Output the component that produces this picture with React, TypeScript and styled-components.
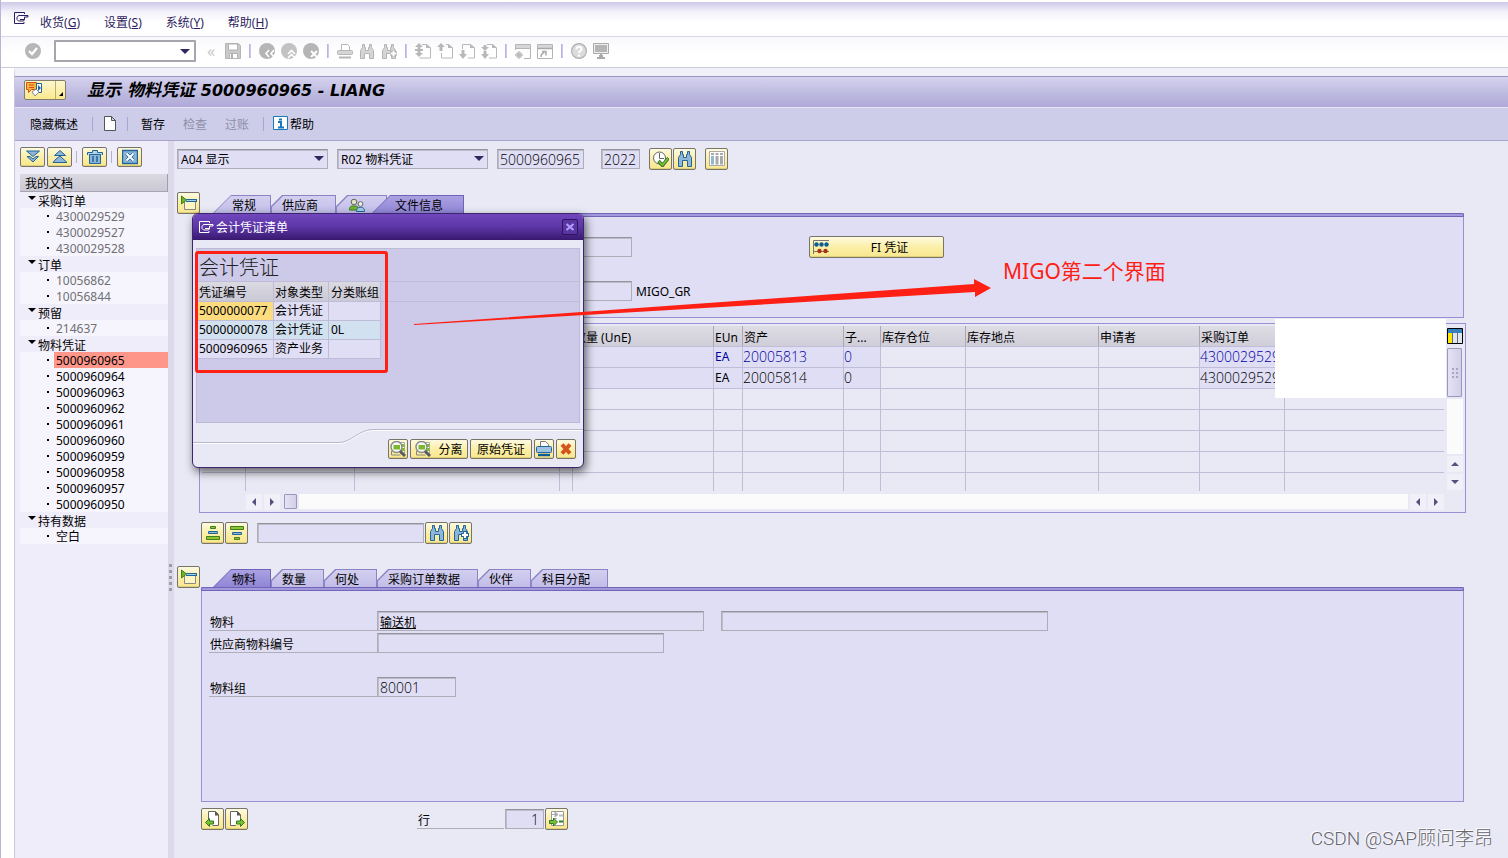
import React from 'react';
import styled, { createGlobalStyle, css } from 'styled-components';

const ui = `"Noto Sans", "Noto Sans CJK SC", sans-serif`;

const GlobalStyle = createGlobalStyle`
  *, *::before, *::after { box-sizing: border-box; }
  body { margin: 0; background: #fff; font: 12px/16px ${ui}; color: #000; }
  button, input, select { font: inherit; color: inherit; margin: 0; padding: 0; border-radius: 0; }
  button { background: none; border: 0; }
  ul { list-style: none; margin: 0; padding: 0; }
  h1, h2 { margin: 0; }
  svg { display: block; flex: none; }
`;

/* ---------- icons ---------- */

const icons: Record<string, React.ReactNode> = {
  exit: <path d="M11.500 4V2.500H1.500v11h9.500V12M15 5.500H5.500l-1.500 2v2l1.500 1.500h5l1-1.500M15 5.500v1.500h-3.500M7 9.500h4.500V7" fill="none" stroke="currentColor" />,
  check: <><circle cx="8" cy="8" r="8" fill="#b7b7b7" /><path d="M4 8l3 3 5-6" stroke="#fff" strokeWidth="2.200" fill="none" /></>,
  save: <><path d="M.5.5h13l2 2v13H.5z" fill="#c9c9c9" stroke="#b4b4b4" /><path d="M3.500 1h9v6h-9zM4.500 10.500h8v5h-8z" fill="#fff" stroke="#b4b4b4" /><path d="M7 11v4" stroke="#b0b0b0" strokeWidth="2" /></>,
  back: <><circle cx="8" cy="8" r="8" fill="#b5b5b5" /><path d="M10 7l-3 3.500 3 3.500M15 7l-3 3.500 3 3.500" stroke="#fff" strokeWidth="1.600" fill="none" /></>,
  up: <><circle cx="8" cy="8" r="8" fill="#c2c2c2" /><path d="M7 11l3.500-3.500L14 11M7 15l3.500-3.500L14 15" stroke="#fff" strokeWidth="1.600" fill="none" /></>,
  cancel: <><circle cx="8" cy="8" r="8" fill="#b5b5b5" /><path d="M8 8l6 6M14 8l-6 6" stroke="#fff" strokeWidth="2" /></>,
  printGray: <><path d="M4.500 8V1.500h6l2 2V8" fill="#fff" stroke="#b5b5b5" /><rect x=".5" y="7.500" width="15" height="4" rx="1" fill="#d5d5d5" stroke="#b5b5b5" /><path d="M2 14.500h12" stroke="#b5b5b5" strokeWidth="2" /></>,
  findGray: <path d="M3.500 1.500h2v3h1v3h3v-3h1v-3h2v3l2 3v8h-4v-5h-5v5h-4v-8l2-3z" fill="#d5d5d5" stroke="#b4b4b4" />,
  nextGray: <><path d="M3.500 1.500h2v3h1v3h3v-3h1v-3h2v3l2 3v8h-4v-5h-5v5h-4v-8l2-3z" fill="#d5d5d5" stroke="#b4b4b4" /><path d="M9 10.500h7M12.500 7v7" stroke="#aaa" strokeWidth="4" /><path d="M9.500 10.500h6M12.500 7.500v6" stroke="#fff" strokeWidth="2" /></>,
  pageFirst: <><path d="M7 1.500h5l3.500 3.500v10H4.500" fill="none" stroke="#b8b8b8" /><path d="M4 0l4 4H5.500v2H8v2H5.500v2H8l-4 4-4-4h2.500V8H0V6h2.500V4H0z" fill="#b8b8b8" /><path d="M11 1v4h5z" fill="#b8b8b8" /></>,
  pageUp: <><path d="M9 1.500h3l3.500 3.500v10h-11v-5" fill="none" stroke="#b8b8b8" /><path d="M4 0l4 4H5.500v4h-3V4H0zM11 1v4h5z" fill="#b8b8b8" /></>,
  pageDown: <><path d="M3.500 6V1.500h8.500l3.500 3.500v10H9" fill="none" stroke="#b8b8b8" /><path d="M4 16l4-5H5.500V7h-3v4H0zM11 1v4h5z" fill="#b8b8b8" /></>,
  pageLast: <><path d="M6 1.500h6l3.500 3.500v10H8" fill="none" stroke="#b8b8b8" /><path d="M4 8l4-4H5.500V2h-3v2H0zM4 16l4-5H5.500V8h-3v3H0zM11 1v4h5z" fill="#b8b8b8" /></>,
  session: <><path d="M.5 7V1.500h15v14H9" fill="none" stroke="#b5b5b5" /><path d="M1 2h14v3H1z" fill="#d6d6d6" /><path d="M0 5.500h16" stroke="#b5b5b5" /><path d="M4 8v8M0 12h8M1.500 9.500l5 5M6.500 9.500l-5 5" stroke="#bbb" strokeWidth="1.400" /></>,
  shortcut: <><path d="M.5 1.500h15v14H.5z" fill="none" stroke="#b5b5b5" /><path d="M1 2h14v3H1z" fill="#d6d6d6" /><path d="M0 5.500h16M4 14c0-3 1-4 3.500-4.500M5 8.500h4v4" stroke="#aaa" strokeWidth="1.500" fill="none" /></>,
  help: <><circle cx="8" cy="8" r="7.400" fill="#dcdcdc" stroke="#b0b0b0" strokeWidth="1.200" /><path d="M5.500 6.200C5.500 3 10.500 3 10.500 6 10.500 8 8 8 8 10M8 11.500v2" stroke="#fff" strokeWidth="2" fill="none" /></>,
  monitor: <><path d="M.5.500h15v10H.5z" fill="#eee" stroke="#aaa" /><path d="M2 2h12v7H2z" fill="#b5b5b5" /><path d="M8 11v3M4 15h8M6 13h4" stroke="#aaa" strokeWidth="2" /></>,
  page: <path d="M2.500.500h7l4 4v10h-11zM9.500.500v4h4z" fill="#fff" stroke="#555" />,
  info: <><path d="M.5.500h14v13H.5z" fill="#fff" stroke="#1878b8" /><path d="M5 6h3v5M5 11.500h6M6 3.500h3" stroke="#1878b8" strokeWidth="2" fill="none" /></>,
  expand: <path d="M1.500 2h13L8 7.500zM4 7.500h1L8 10l3-2.500h2.500L8 13 2 7.500z" fill="#8fb6d8" stroke="#20659a" />,
  collapse: <path d="M8 1.500l5.500 5H2.500zM8 7l7 6.500H1L4 10z" fill="#8fb6d8" stroke="#20659a" />,
  trash: <><path d="M.5 6V3.500h5V1.500h5v2h5V6" fill="#b8d4ea" stroke="#20659a" /><path d="M2.500 5.500h11v9h-11z" fill="#8fb6d8" stroke="#20659a" /><path d="M6 7v6M10 7v6" stroke="#20659a" strokeWidth="1.500" /></>,
  close: <><path d="M.5 1.500h15v13H.5z" fill="#8fb6d8" stroke="#20659a" strokeWidth="1.500" /><path d="M4.500 4.500l7 7M11.500 4.500l-7 7" stroke="#20659a" strokeWidth="3.500" /><path d="M4.500 4.500l7 7M11.500 4.500l-7 7" stroke="#fff" strokeWidth="2" /></>,
  clock: <><circle cx="6.500" cy="7" r="6" fill="#fff" stroke="#666" /><path d="M6.500 2v5.500H11" stroke="#666" fill="none" /><path d="M5.500 10l4 4.500L15.500 7" stroke="#2f7a2b" strokeWidth="3.400" fill="none" /><path d="M6 10.500l3.500 3.500L15 7.500" stroke="#84c136" strokeWidth="1.600" fill="none" /></>,
  find: <path d="M3.500.500h2v3h1v3h3v-3h1v-3h2v3l2 3v9h-4v-6h-5v6h-4v-9l2-3z" fill="#8fb6d8" stroke="#20659a" />,
  findNext: <><path d="M3.500.500h2v3h1v3h3v-3h1v-3h2v3l2 3v9h-4v-6h-5v6h-4v-9l2-3z" fill="#8fb6d8" stroke="#20659a" /><path d="M8 10h8M12 6v8" stroke="#20659a" strokeWidth="4" /><path d="M9 10h6M12 7v6" stroke="#fff" strokeWidth="2.200" /></>,
  columns: <><path d="M.5.500h15v14H.5z" fill="#fff" stroke="#aaa" /><path d="M2 2h3v2H2zM6.500 2h3v2h-3zM11 2h3v2h-3zM6.500 5h3v8.500h-3zM11 5h3v8.500h-3z" fill="#a9a9a9" /><path d="M2 5h3v8.500H2z" fill="#8fb9cf" /></>,
  panel: <><path d="M3.500 6v8.500h11V6" fill="#fdf5c4" stroke="#888" /><path d="M5 5.500h11" stroke="#20659a" strokeWidth="3" /><path d="M5 5.500h10" stroke="#9fd0e8" /><path d="M.5 1v8l5-4z" fill="#6db52c" stroke="#3f7f1c" /></>,
  partners: <><circle cx="5" cy="4" r="2.800" fill="#e6e2c8" stroke="#5d6a5a" /><path d="M.5 12c0-4 2-4 4.500-4s4.500 0 4.500 4z" fill="#71b530" stroke="#3f7a20" /><circle cx="11.500" cy="6" r="2.400" fill="#eee" stroke="#666" /><path d="M7.500 13.500c0-4 2-4 4-4s4 0 4 4z" fill="#a6cdea" stroke="#20659a" /></>,
  fi: <><path d="M.5 15V1.500H16M.5 12.500H16" stroke="#777" fill="none" /><g fill="#0b5c93"><circle cx="3.500" cy="5.500" r="2.200" /><circle cx="8.500" cy="5.500" r="2.200" /><circle cx="13.500" cy="5.500" r="2.200" /></g><g fill="#a83216"><circle cx="6.500" cy="12" r="2.200" /><circle cx="12.500" cy="12" r="2.200" /></g></>,
  asc: <><path d="M5.500 1.500h5v2h-5zM1.500 11.500h13v3h-13z" fill="#8fc32f" stroke="#3f7f1c" /><path d="M3.500 6.500h9v2h-9z" fill="#8fb6d8" stroke="#20659a" /></>,
  desc: <><path d="M1.500 1.500h13v3h-13zM5.500 12.500h5v2h-5z" fill="#8fc32f" stroke="#3f7f1c" /><path d="M3.500 7.500h9v2h-9z" fill="#8fb6d8" stroke="#20659a" /></>,
  prev: <><path d="M3.500 8V.5h7l3 3v11h-6" fill="#fff" stroke="#666" /><path d="M10 0v4.500h4z" fill="#555" /><path d="M.5 11.500l4-4v2.500h4v3h-4v2.500z" fill="#7cc030" stroke="#2f7a2b" /></>,
  next: <><path d="M7 14.500H1.500V.5h7l3 3V8" fill="#fff" stroke="#666" /><path d="M8 0v4.500h4z" fill="#555" /><path d="M15.500 11.500l-4-4v2.500h-4v3h4v2.500z" fill="#7cc030" stroke="#2f7a2b" /></>,
  goto: <><path d="M2.500.500h12v14h-12z" fill="#fff" stroke="#999" /><path d="M3 3.500h5M6 1v5l3-2.500zM5 7.500h3" stroke="#aaa" fill="#aaa" /><path d="M10 10.500h4" stroke="#2f7a2b" strokeWidth="2" /><path d="M10 4.500h4" stroke="#bbb" strokeWidth="2" /><path d="M8.500 11l-4-4v2.500h-4v3h4V15z" fill="#7cc030" stroke="#2f7a2b" /></>,
  detail: <><path d="M9 1.500h5.500v11H10" fill="#fff" stroke="#aaa" /><path d="M13 3v3M13 7v3" stroke="#7cc030" strokeWidth="3" /><path d="M1.500 10v4h9" fill="none" stroke="#888" /><circle cx="6.500" cy="6" r="5.500" fill="#f5f7f4" stroke="#888" strokeWidth="1.400" /><path d="M3.500 4h6.500v4.500H3.500z" fill="#7cb82c" /><path d="M10 10l5 5" stroke="#5c5c5c" strokeWidth="3" /></>,
  print: <><path d="M4.500 6V.5h5l3 3V6" fill="#fff" stroke="#777" /><rect x=".5" y="5.500" width="15" height="6" rx="1" fill="#9cc3e2" stroke="#20659a" /><path d="M2 14h12" stroke="#0b5c93" strokeWidth="2.500" /></>,
  cross: <path d="M4 3.500l8 9M12 3.500l-8 9" stroke="#d4551b" strokeWidth="4" />,
  x: <path d="M4 4.500l8 7M12 4.500l-8 7" stroke="#b49cff" strokeWidth="2.400" />,
  config: <><path d="M.5.500h15v15H.5z" fill="#fff" stroke="#000" /><path d="M1 1h14v4H1z" fill="#2a86c8" /><path d="M1 5h5v10H1z" fill="#ffe800" /><path d="M6 5h4v10H6zM11 5h4v10h-4z" fill="#dfe6ec" /><path d="M5.500 1v14M10.500 1v14" stroke="#668" /></>,
  left: <path d="M10 4v8L6 8z" fill="#55517d" />,
  right: <path d="M6 4v8l4-4z" fill="#55517d" />,
  upArrow: <path d="M4 10h8L8 6z" fill="#55517d" />,
  downArrow: <path d="M4 6h8l-4 4z" fill="#55517d" />,
};

const Icon = ({ name, size = 16 }: { name: string; size?: number }) => (
  <svg width={size} height={size} viewBox="0 0 16 16" aria-hidden="true">{icons[name]}</svg>
);

/* ---------- window chrome ---------- */

const Page = styled.div`
  position: relative;
  min-height: 100vh;
  display: flex;
  flex-direction: column;
  border-left: 1px solid #bab4d6;
  overflow: hidden;
`;
const MenuBar = styled.nav`
  height: 37px;
  display: flex;
  align-items: center;
  gap: 24px;
  padding: 8px 0 0 12px;
  color: #2d1d60;
  border-bottom: 1px solid #d9d7ea;
  background: linear-gradient(#fff 2px, #cdc9e8 2px, #f3f2fa 12px, #fff 22px);
`;
const MenuIcon = styled.span`
  width: 3px;
  padding-bottom: 8px;
`;
const MenuItem = styled.button`
  padding-top: 2px;
`;
const Toolbar = styled.div`
  height: 31px;
  display: flex;
  align-items: center;
  gap: 6px;
  padding: 0 0 2px 24px;
  background: linear-gradient(#f8f8fc, #fff 16px);
  border-bottom: 1px solid #cccbd6;
`;
const FlatIcon = styled.button`
  width: 16px;
  height: 16px;
`;
const BarRule = styled.span`
  width: 2px;
  height: 14px;
  margin: 0 2px;
  background: linear-gradient(90deg, #b1a9de, #d7d3ee);
`;
const dropArrow = css`
  &::after {
    content: '';
    position: absolute;
    right: 4px;
    top: 7px;
    border: 5px solid transparent;
    border-top-color: #33255f;
    border-bottom: 0;
    pointer-events: none;
  }
`;
const CommandField = styled.label`
  position: relative;
  width: 142px;
  margin: 0 1px 0 7px;
  ${dropArrow}
  &::after { right: 6px; top: 9px; }
  input {
    display: block;
    width: 100%;
    height: 22px;
    border: 2px solid #a5a5ad;
    background: #fff;
    border-radius: 1px;
  }
`;
const Chevrons = styled.span`
  width: 16px;
  color: #c8c8c8;
  font-size: 16px;
  text-align: center;
`;
const Frame = styled.div`
  flex: 1;
  display: flex;
  flex-direction: column;
  margin-left: 13px;
  border-left: 1px solid #c9c6e0;
  border-top: 8px solid #f0f0f8;
`;
const TitleBar = styled.header`
  height: 32px;
  display: flex;
  align-items: center;
  gap: 21px;
  padding: 0 0 4px 9px;
  border-top: 1px solid #9a94bf;
  border-bottom: 1px solid #e6e3f5;
  background: linear-gradient(#d6d2ef, #bbb8de 18px, #b0a9d9);
`;
const Title = styled.h1`
  font: italic bold 16px/20px "DejaVu Sans", "Noto Sans CJK SC", sans-serif;
  span { font-size: 17px; }
`;
const ServiceButton = styled.button`
  display: flex;
  align-items: center;
  width: 42px;
  height: 20px;
  border: 1px solid #807d6c;
  border-radius: 2px;
  background: linear-gradient(#fdf7d0, #fae88d);
`;
const ActionBar = styled.div`
  height: 33px;
  display: flex;
  align-items: center;
  padding-left: 15px;
  background: #cdcde9;
  border-bottom: 1px solid #a9a4cc;
`;
const Action = styled.button<{ $tight?: boolean }>`
  display: flex;
  align-items: center;
  gap: 1px;
  margin-right: ${p => (p.$tight ? 13 : 18)}px;
  &:disabled { color: #8f8da8; }
  span { padding-top: 2px; }
`;
const ActionRule = styled.span<{ $wide?: boolean }>`
  width: 1px;
  height: 14px;
  margin: 0 ${p => (p.$wide ? 13 : 9)}px 0 -4px;
  background: #a9a3d2;
`;

/* ---------- controls ---------- */

const GoldButton = styled.button<{ $w?: number; $h?: number }>`
  flex: none;
  display: flex;
  align-items: center;
  justify-content: center;
  gap: 7px;
  width: ${p => p.$w ?? 23}px;
  height: ${p => p.$h ?? 22}px;
  border: 1px solid #77756a;
  border-radius: 2px;
  background: linear-gradient(#fefae0, #fbefa8 50%, #f9e78e);
  box-shadow: inset 0 -1px 0 #e0ce78;
  span { padding-top: 2px; }
`;
const fieldLook = css`
  border: 1px solid #adadb5;
  border-top-color: #94949e;
  background: #e0def5;
  box-shadow: inset 1px 1px 0 #bebcca;
  height: 20px;
`;
const Field = styled.input<{ $w: number }>`
  ${fieldLook}
  width: ${p => p.$w}px;
  padding: 0 2px;
  font-family: "Open Sans", ${ui};
  font-weight: 300;
  font-size: 14px;
`;
const NumberField = styled(Field)`
  text-align: right;
  padding-right: 4px;
`;
const LinkField = styled(Field)`
  padding-top: 2px;
  font-weight: 400;
  font-size: 12px;
  text-decoration: underline;
`;
const SelectBox = styled.span`
  position: relative;
  ${dropArrow}
  select {
    ${fieldLook}
    display: block;
    appearance: none;
    width: 151px;
    padding: 2px 0 0 3px;
  }
`;

/* ---------- layout ---------- */

const Workspace = styled.div`
  flex: 1;
  display: flex;
`;
const Sidebar = styled.aside`
  width: 153px;
  flex: none;
  padding: 6px 0 0 5px;
  background: #efedfa;
`;
const SideTools = styled.div`
  display: flex;
  align-items: center;
  gap: 2px;
  height: 20px;
  margin-bottom: 7px;
`;
const SideRule = styled.span`
  width: 1px;
  height: 12px;
  margin: 0 3px 0 2px;
  background: #b5b3c4;
`;
const SideHeader = styled.h2`
  height: 18px;
  padding-left: 5px;
  font: 12px/19px ${ui};
  background: linear-gradient(#dbdae2, #c9c8d3);
  border-right: 1px solid #9f9dae;
  border-bottom: 1px solid #a5a3b4;
`;
const Group = styled.li`
  background: #efedf9;
`;
const GroupName = styled.div`
  height: 16px;
  padding: 3px 0 0 18px;
  display: flex;
  align-items: center;
  &::before {
    content: '';
    margin: -8px 2px 0 -10px;
    border: 4px solid transparent;
    border-top-color: #000;
    border-bottom: 0;
  }
`;
const Leaf = styled.li<{ $dim?: boolean; $selected?: boolean }>`
  height: 16px;
  display: flex;
  align-items: center;
  padding-left: 27px;
  background: #f6f5fe;
  color: ${p => (p.$dim ? '#707070' : '#000')};
  &::before {
    content: '';
    width: 2px;
    height: 2px;
    margin: 0 5px 1px 0;
    background: #000;
  }
  span {
    flex: 1;
    height: 16px;
    padding: 1px 0 0 2px;
    background: ${p => (p.$selected ? '#ff968a' : 'none')};
  }
`;
const Splitter = styled.div`
  width: 6px;
  flex: none;
  background: #dbd9ea;
  padding: 423px 0 0 1px;
  span {
    display: block;
    width: 3px;
    height: 3px;
    margin-bottom: 3px;
    background: #9d9ba8;
  }
`;
const Main = styled.main`
  flex: 1;
  min-width: 0;
  padding: 7px 42px 28px 0;
  background: #e9e9f5;
`;
const FieldRow = styled.div`
  display: flex;
  align-items: center;
  gap: 9px;
  height: 22px;
  padding-left: 3px;
`;
const Spacer = styled.span<{ $w: number }>`
  width: ${p => p.$w}px;
  flex: none;
`;
const Cluster = styled.div<{ $gap?: number }>`
  display: flex;
  align-items: center;
  gap: ${p => p.$gap ?? 1}px;
`;
const Section = styled.section`
  display: flex;
  align-items: flex-start;
  gap: 1px;
  margin-top: 22px;
  padding: 0 2px 0 3px;
`;
const SectionBody = styled.div`
  flex: 1;
  min-width: 0;
  padding-top: 3px;
`;
const Tabs = styled.div`
  display: flex;
  height: 18px;
  padding-left: 12px;
`;
const Tab = styled.button<{ $active?: boolean; $slope?: boolean; $overlap?: boolean }>`
  position: relative;
  display: flex;
  align-items: center;
  height: 18px;
  padding: 4px 18px 0 11px;
  background: ${p => (p.$active ? '#6f63b8' : '#8b84c4')};
  clip-path: polygon(11px 0, 100% 0, 100% 100%, 0 100%, 0 11px);
  ${p => p.$slope && css`
    padding: 4px 15px 0 19px;
    clip-path: polygon(18px 0, 100% 0, 100% 100%, 0 100%);
  `}
  ${p => p.$overlap && css`
    padding: 4px 21px 0 23px;
    margin-left: -15px;
  `}
  &::before {
    content: '';
    position: absolute;
    inset: 1px 1px 0 1px;
    background: ${p => (p.$active ? 'linear-gradient(#aaa1e2, #9086d6)' : 'linear-gradient(#d3cff0, #c2bde8)')};
    clip-path: ${p => (p.$slope ? 'polygon(17px 0, 100% 0, 100% 100%, 0 100%)' : 'polygon(11px 0, 100% 0, 100% 100%, 0 100%, 0 11px)')};
  }
  > * { position: relative; }
`;
const Panel = styled.div<{ $h: number }>`
  min-height: ${p => p.$h}px;
  background: #e0def4;
  border: 1px solid #9990d4;
  border-top: 0;
  &::before {
    content: '';
    display: block;
    height: 4px;
    margin: 0 -1px;
    background: #a198dd;
    border: 1px solid #7166b6;
    border-radius: 2px 2px 0 0;
  }
`;
const FormRow = styled.div<{ $top?: number }>`
  display: flex;
  align-items: center;
  height: 20px;
  margin-top: ${p => p.$top ?? 2}px;
  padding-left: 7px;
`;
const FormLabel = styled.label<{ $w: number }>`
  width: ${p => p.$w}px;
  height: 20px;
  padding: 4px 0 0 1px;
  border-bottom: 1px solid #b0afb8;
`;
const Note = styled.span`
  padding: 2px 0 0 4px;
`;
const FiLabel = styled.span`
  flex: 1;
  text-align: center;
`;

/* ---------- item grid ---------- */

const GridPanel = styled.div`
  position: relative;
  margin: 5px 0 9px 25px;
  padding: 2px;
  border: 1px solid #9990d4;
  display: flex;
  gap: 3px;
`;
const GridMain = styled.div`
  flex: 1;
  min-width: 0;
`;
const ItemTable = styled.table`
  width: 100%;
  table-layout: fixed;
  border-collapse: separate;
  border-spacing: 0;
  th, td {
    height: 21px;
    padding: 0 1px;
    text-align: left;
    font-weight: normal;
    white-space: nowrap;
    overflow: hidden;
    border-right: 1px solid #bfbdd8;
    border-bottom: 1px solid #bfbdd8;
  }
  th {
    padding-top: 3px;
    background: linear-gradient(#dedde4, #cfced9);
    border-right-color: #a9a7b8;
  }
  th:last-child, td:last-child { border-right: 0; }
  tbody tr:last-child td { height: 18px; border-bottom: 0; }
`;
const Cell = styled.td<{ $filled?: boolean; $blue?: boolean; $big?: boolean }>`
  background: ${p => (p.$filled ? '#e0def5' : 'transparent')};
  color: ${p => (p.$blue ? '#0000a0' : '#000')};
  ${p => p.$big && css`
    && { padding-left: 0; }
    font-family: "Open Sans", ${ui};
    font-weight: 300 !important;
    font-size: 14px;
  `}
`;
const HScroll = styled.div`
  display: flex;
  align-items: center;
  gap: 2px;
  height: 15px;
  margin: 3px 0 1px 44px;
`;
const ScrollButton = styled.button`
  width: 16px;
  height: 16px;
  background: #f1f0f9;
`;
const Track = styled.div`
  flex: 1;
  height: 15px;
  background: #fbfbfc;
`;
const Thumb = styled.div<{ $w: number; $h: number }>`
  width: ${p => p.$w}px;
  height: ${p => p.$h}px;
  border: 1px solid #9c98bb;
  border-radius: 1px;
  background: linear-gradient(90deg, #e4e2f3, #d2cfe8);
  display: grid;
  place-content: center;
  grid-template-columns: 2px 2px;
  gap: 2px;
  span { width: 2px; height: 2px; background: #a9a5c8; }
`;
const VScroll = styled.div`
  width: 16px;
  display: flex;
  flex-direction: column;
  gap: 2px;
  padding-bottom: 20px;
`;
const VTrack = styled(Track)`
  width: 16px;
`;
const ConfigButton = styled.button`
  width: 16px;
  height: 20px;
`;
const Blank = styled.div`
  position: absolute;
  right: 19px;
  top: -5px;
  width: 171px;
  height: 79px;
  background: #fff;
`;

/* ---------- dialog ---------- */

const Dialog = styled.div`
  position: absolute;
  left: 191px;
  top: 213px;
  width: 392px;
  height: 255px;
  display: flex;
  flex-direction: column;
  border: 1px solid #3c2670;
  border-radius: 6px;
  overflow: hidden;
  background: #e9e9f5;
  box-shadow: 2px 4px 10px rgba(0, 0, 0, 0.6);
`;
const DialogTitle = styled.div`
  height: 26px;
  display: flex;
  align-items: center;
  gap: 2px;
  padding: 0 5px 0 5px;
  color: #fff;
  background: linear-gradient(#7146bd, #5c36a6 50%, #38196f);
  h2 { flex: 1; padding-top: 2px; font: 12px/16px ${ui}; }
`;
const CloseButton = styled.button`
  width: 16px;
  height: 16px;
  display: grid;
  place-items: center;
  border: 1px solid #2c145f;
  border-radius: 2px;
  background: #5a36a2;
`;
const DialogBody = styled.div`
  height: 175px;
  margin: 8px 3px 0;
  border: 1px solid #bdbad6;
  background: #cdcae9;
`;
const ListHeading = styled.h2`
  height: 33px;
  padding: 0 2px;
  border-bottom: 1px solid #bfbcd9;
  font: 300 20px/35px "Noto Sans CJK SC", sans-serif;
  color: #222;
`;
const ListBand = styled.div`
  border-bottom: 1px solid #bfbcd9;
  height: 20px;
`;
const DocTable = styled.table`
  border-collapse: separate;
  border-spacing: 0;
  table-layout: fixed;
  width: 184px;
  th, td {
    height: 19px;
    padding: 0 2px;
    font-weight: normal;
    text-align: left;
    white-space: nowrap;
    border-right: 1px solid #bfbcd9;
    border-bottom: 1px solid #bfbcd9;
    background: #e0def4;
  }
  th { height: 20px; padding-top: 3px; background: linear-gradient(#dbdae2, #cac9d6); }
  th:nth-child(2), td:nth-child(2) { padding-left: 1px; }
  tbody tr:nth-child(2) td { background: #d1e1ef; }
  tbody tr:first-child td:first-child { background: #fddc80; }
`;
const DialogFooter = styled.div`
  position: relative;
  flex: 1;
  display: flex;
  gap: 2px;
  justify-content: flex-end;
  padding: 16px 7px 0;
`;
const FooterCurve = styled.svg`
  position: absolute;
  left: 0;
  top: 6px;
`;
const DialogButtons = styled.div`
  position: relative;
  display: flex;
  align-items: flex-start;
  gap: 2px;
`;
const BottomRow = styled.div`
  display: flex;
  gap: 169px;
  margin-top: 6px;
  padding-left: 27px;
`;

/* ---------- annotations ---------- */

const RedFrame = styled.div`
  position: absolute;
  left: 194px;
  top: 251px;
  width: 193px;
  height: 122px;
  border: 3px solid #ff2015;
  border-radius: 3px;
`;
const Arrow = styled.svg`
  position: absolute;
  left: 411px;
  top: 275px;
`;
const Caption = styled.p`
  position: absolute;
  left: 1002px;
  top: 257px;
  margin: 0;
  font-size: 21px;
  line-height: 28px;
  color: #ff2015;
  white-space: nowrap;
`;
const Watermark = styled.p`
  position: absolute;
  right: 15px;
  bottom: 6px;
  margin: 0;
  font-family: Roboto, "Noto Sans CJK SC", sans-serif;
  font-weight: 300;
  font-size: 19px;
  line-height: 26px;
  color: #66666c;
  text-shadow: -1px -1px 0 #fff;
`;

/* ---------- data ---------- */

const menus = [['收货', 'G'], ['设置', 'S'], ['系统', 'Y'], ['帮助', 'H']];
const toolGroups = [
  ['save'],
  ['back', 'up', 'cancel'],
  ['printGray', 'findGray', 'nextGray'],
  ['pageFirst', 'pageUp', 'pageDown', 'pageLast'],
  ['session', 'shortcut'],
  ['help', 'monitor'],
];
const tree = [
  { name: '采购订单', dim: true, items: ['4300029529', '4300029527', '4300029528'] },
  { name: '订单', dim: true, items: ['10056862', '10056844'] },
  { name: '预留', dim: true, items: ['214637'] },
  {
    name: '物料凭证',
    dim: false,
    items: ['5000960965', '5000960964', '5000960963', '5000960962', '5000960961', '5000960960', '5000960959', '5000960958', '5000960957', '5000960950'],
  },
  { name: '持有数据', dim: false, items: ['空白'] },
];
const columns: [string, number | undefined][] = [
  ['', 44], ['', 109], ['', 205], ['', 13], ['数量 (UnE)', 141], ['EUn', 29], ['资产', 101], ['子...', 37],
  ['库存仓位', 85], ['库存地点', 133], ['申请者', 101], ['采购订单', 85], ['', undefined],
];
const rows = [
  ['', '', '', '', '', 'EA', '20005813', '0', '', '', '', '4300029529', ''],
  ['', '', '', '', '', 'EA', '20005814', '0', '', '', '', '4300029529', ''],
  ...Array.from({ length: 5 }, () => Array(13).fill('')),
];
const docs = [
  ['5000000077', '会计凭证', ''],
  ['5000000078', '会计凭证', '0L'],
  ['5000960965', '资产业务', ''],
];
const detailTabs = ['物料', '数量', '何处', '采购订单数据', '伙伴', '科目分配'];

export default function App() {
  return (
    <>
      <GlobalStyle />
      <Page>
        <MenuBar>
          <MenuIcon><Icon name="exit" /></MenuIcon>
          {menus.map(([label, key]) => (
            <MenuItem key={key}>{label}(<u>{key}</u>)</MenuItem>
          ))}
        </MenuBar>
        <Toolbar>
          <FlatIcon aria-label="确认"><Icon name="check" /></FlatIcon>
          <CommandField><input aria-label="命令" /></CommandField>
          <Chevrons>«</Chevrons>
          {toolGroups.map((group, i) => (
            <React.Fragment key={i}>
              {i > 0 && <BarRule />}
              {group.map(name => <FlatIcon key={name} aria-label={name}><Icon name={name} /></FlatIcon>)}
            </React.Fragment>
          ))}
        </Toolbar>
        <Frame>
          <TitleBar>
            <ServiceButton aria-label="服务">
              <svg width="40" height="18" viewBox="0 0 40 18">
                <path d="M1.500 1.500h10v7h-5l-3 3v-3h-2z" fill="#f8b43c" stroke="#d0501c" />
                <path d="M4 4h5M4 6.500h5" stroke="#d0501c" />
                <path d="M11.500 2.500h5v9h-5z" fill="#fff" stroke="#20659a" />
                <path d="M13 4v6l3-3z" fill="#20659a" />
                <path d="M7 11l4-3 3 3-4 4z" fill="#fff" stroke="#888" />
                <path d="M30.500 0v18" stroke="#b9ae74" />
                <path d="M38 11v4h-4z" />
              </svg>
            </ServiceButton>
            <Title><span>显示 物料凭证 </span>5000960965 - LIANG</Title>
          </TitleBar>
          <ActionBar>
            <Action><span>隐藏概述</span></Action>
            <ActionRule />
            <Action $tight aria-label="新建"><Icon name="page" /></Action>
            <ActionRule $wide />
            <Action><span>暂存</span></Action>
            <Action disabled><span>检查</span></Action>
            <Action disabled><span>过账</span></Action>
            <ActionRule />
            <Action><Icon name="info" /><span>帮助</span></Action>
          </ActionBar>
          <Workspace>
            <Sidebar>
              <SideTools>
                <GoldButton $w={25} $h={20} aria-label="展开"><Icon name="expand" /></GoldButton>
                <GoldButton $w={25} $h={20} aria-label="折叠"><Icon name="collapse" /></GoldButton>
                <SideRule />
                <GoldButton $w={25} $h={20} aria-label="删除"><Icon name="trash" /></GoldButton>
                <SideRule />
                <GoldButton $w={25} $h={20} aria-label="关闭"><Icon name="close" /></GoldButton>
              </SideTools>
              <SideHeader>我的文档</SideHeader>
              <ul>
                {tree.map(group => (
                  <Group key={group.name}>
                    <GroupName>{group.name}</GroupName>
                    <ul>
                      {group.items.map(item => (
                        <Leaf key={item} $dim={group.dim} $selected={item === '5000960965'}><span>{item}</span></Leaf>
                      ))}
                    </ul>
                  </Group>
                ))}
              </ul>
            </Sidebar>
            <Splitter><span /><span /><span /><span /><span /></Splitter>
            <Main>
              <FieldRow>
                <SelectBox><select aria-label="操作"><option>A04 显示</option></select></SelectBox>
                <SelectBox><select aria-label="参考凭证"><option>R02 物料凭证</option></select></SelectBox>
                <Cluster $gap={17}>
                  <Field $w={87} aria-label="凭证编号" defaultValue="5000960965" />
                  <Field $w={39} aria-label="年度" defaultValue="2022" />
                </Cluster>
                <Cluster>
                  <GoldButton aria-label="执行"><Icon name="clock" /></GoldButton>
                  <GoldButton aria-label="查找"><Icon name="find" /></GoldButton>
                </Cluster>
                <GoldButton aria-label="列"><Icon name="columns" /></GoldButton>
              </FieldRow>

              <Section>
                <GoldButton aria-label="折叠抬头"><Icon name="panel" /></GoldButton>
                <SectionBody>
                  <Tabs>
                    <Tab $slope><span>常规</span></Tab>
                    <Tab><span>供应商</span></Tab>
                    <Tab aria-label="伙伴"><Spacer $w={2} /><Icon name="partners" /><Spacer $w={4} /></Tab>
                    <Tab $slope $overlap $active><span>文件信息</span></Tab>
                  </Tabs>
                  <Panel $h={105}>
                    <FormRow $top={20}>
                      <Spacer $w={168} />
                      <Field $w={255} aria-label="凭证" />
                      <Spacer $w={177} />
                      <GoldButton $w={135}><Cluster><Spacer $w={2} /><Icon name="fi" /></Cluster><FiLabel>FI 凭证</FiLabel></GoldButton>
                    </FormRow>
                    <FormRow $top={24}>
                      <Spacer $w={168} />
                      <Field $w={255} aria-label="事务" />
                      <Note>MIGO_GR</Note>
                    </FormRow>
                  </Panel>
                </SectionBody>
              </Section>

              <GridPanel>
                <GridMain>
                  <ItemTable>
                    <colgroup>
                      {columns.map(([, w], i) => <col key={i} width={w} />)}
                    </colgroup>
                    <thead>
                      <tr>{columns.map(([name], i) => <th key={i}>{name}</th>)}</tr>
                    </thead>
                    <tbody>
                      {rows.map((row, r) => (
                        <tr key={r}>
                          {row.map((value, c) => (
                            <Cell key={c} $filled={r < 2 && (c < 8 || c === 11)} $blue={r === 0} $big={c > 5}>{value}</Cell>
                          ))}
                        </tr>
                      ))}
                    </tbody>
                  </ItemTable>
                  <HScroll>
                    <ScrollButton aria-label="向左"><Icon name="left" /></ScrollButton>
                    <ScrollButton aria-label="向右"><Icon name="right" /></ScrollButton>
                    <Spacer $w={0} />
                    <Thumb $w={13} $h={15} />
                    <Track />
                    <ScrollButton aria-label="向左滚动"><Icon name="left" /></ScrollButton>
                    <ScrollButton aria-label="向右滚动"><Icon name="right" /></ScrollButton>
                  </HScroll>
                </GridMain>
                <VScroll>
                  <ConfigButton aria-label="表设置"><Icon name="config" /></ConfigButton>
                  <Thumb $w={15} $h={49}><span /><span /><span /><span /><span /><span /></Thumb>
                  <VTrack />
                  <ScrollButton aria-label="向上"><Icon name="upArrow" /></ScrollButton>
                  <ScrollButton aria-label="向下"><Icon name="downArrow" /></ScrollButton>
                </VScroll>
                <Blank />
              </GridPanel>

              <FieldRow>
                <Spacer $w={15} />
                <Cluster>
                  <GoldButton aria-label="升序"><Icon name="asc" /></GoldButton>
                  <GoldButton aria-label="降序"><Icon name="desc" /></GoldButton>
                </Cluster>
                <Cluster>
                  <Field $w={167} aria-label="搜索" />
                  <GoldButton aria-label="查找"><Icon name="find" /></GoldButton>
                  <GoldButton aria-label="查找下一个"><Icon name="findNext" /></GoldButton>
                </Cluster>
              </FieldRow>

              <Section>
                <GoldButton aria-label="折叠明细"><Icon name="panel" /></GoldButton>
                <SectionBody>
                  <Tabs>
                    {detailTabs.map((name, i) => (
                      <Tab key={name} $slope={i === 0} $active={i === 0}><span>{name}</span></Tab>
                    ))}
                  </Tabs>
                  <Panel $h={215}>
                    <FormRow $top={20}>
                      <FormLabel $w={168} htmlFor="material">物料</FormLabel>
                      <LinkField $w={327} id="material" defaultValue="输送机" />
                      <Spacer $w={17} />
                      <Field $w={327} aria-label="物料描述" />
                    </FormRow>
                    <FormRow>
                      <FormLabel $w={168} htmlFor="vendorMaterial">供应商物料编号</FormLabel>
                      <Field $w={287} id="vendorMaterial" />
                    </FormRow>
                    <FormRow $top={24}>
                      <FormLabel $w={168} htmlFor="materialGroup">物料组</FormLabel>
                      <Field $w={79} id="materialGroup" defaultValue="80001" />
                    </FormRow>
                  </Panel>
                </SectionBody>
              </Section>

              <BottomRow>
                <Cluster>
                  <GoldButton aria-label="上一项"><Icon name="prev" /></GoldButton>
                  <GoldButton aria-label="下一项"><Icon name="next" /></GoldButton>
                </Cluster>
                <Cluster>
                  <FormLabel $w={87} htmlFor="line">行</FormLabel>
                  <NumberField $w={39} id="line" defaultValue="1" />
                  <GoldButton aria-label="转到"><Icon name="goto" /></GoldButton>
                </Cluster>
              </BottomRow>
            </Main>
          </Workspace>
        </Frame>

        <Dialog role="dialog" aria-label="会计凭证清单">
          <DialogTitle>
            <Icon name="exit" />
            <h2>会计凭证清单</h2>
            <CloseButton aria-label="关闭"><Icon name="x" size={14} /></CloseButton>
          </DialogTitle>
          <DialogBody>
            <ListHeading>会计凭证</ListHeading>
            <ListBand>
              <DocTable>
                <colgroup><col width={77} /><col width={55} /><col width={52} /></colgroup>
                <thead>
                  <tr><th>凭证编号</th><th>对象类型</th><th>分类账组</th></tr>
                </thead>
                <tbody>
                  {docs.map(row => (
                    <tr key={row[0]}>{row.map((value, i) => <td key={i}>{value}</td>)}</tr>
                  ))}
                </tbody>
              </DocTable>
            </ListBand>
          </DialogBody>
          <DialogFooter>
            <FooterCurve width="390" height="18" viewBox="0 0 390 18">
              <path d="M0 14.500h146c12 0 20-13 34-13h210" fill="none" stroke="#fff" />
              <path d="M0 13.500h146c12 0 20-13 34-13h210" fill="none" stroke="#b9b6cf" />
            </FooterCurve>
            <DialogButtons>
              <GoldButton $w={20} $h={20} aria-label="明细"><Icon name="detail" /></GoldButton>
              <GoldButton $w={58} $h={20}><Icon name="detail" /><span>分离</span></GoldButton>
              <GoldButton $w={62} $h={20}><span>原始凭证</span></GoldButton>
              <GoldButton $w={20} $h={20} aria-label="打印"><Icon name="print" /></GoldButton>
              <GoldButton $w={20} $h={20} aria-label="取消"><Icon name="cross" /></GoldButton>
            </DialogButtons>
          </DialogFooter>
        </Dialog>

        <RedFrame />
        <Arrow width="582" height="60" viewBox="0 0 582 60">
          <path d="M2 49L562 9V4l17 9-16 9v-5L2 50z" fill="#ff2015" />
        </Arrow>
        <Caption>MIGO第二个界面</Caption>
        <Watermark>CSDN @SAP顾问李昂</Watermark>
      </Page>
    </>
  );
}
